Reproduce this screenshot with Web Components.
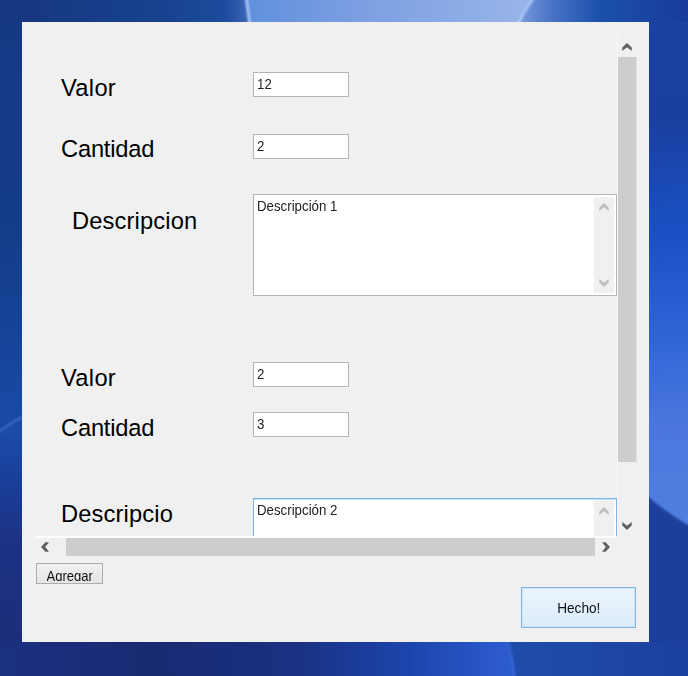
<!DOCTYPE html>
<html lang="es">
<head>
<meta charset="utf-8">
<title>Formulario</title>
<style>
html,body{margin:0;height:100%;overflow:hidden}
body{font-family:"Liberation Sans",Arial,sans-serif;color:#111}
</style>
</head>
<body>
<desk-top>
  <form-window>
    <scroll-pane>
      <field-row label="Valor" value="12" style="margin-top:36px;--ls:.3px"></field-row>
      <field-row label="Cantidad" value="2" style="margin-top:36.5px;--drop:1px;--ls:-.2px"></field-row>
      <field-row label="Descripcion" value="Descripción 1" multi style="margin-top:35px;--indent:37px;--drop:13px;--ls:.15px"></field-row>
      <field-row label="Valor" value="2" style="margin-top:66.5px;--ls:.3px"></field-row>
      <field-row label="Cantidad" value="3" style="margin-top:25px;--ls:-.2px"></field-row>
      <field-row label="Descripcio" value="Descripción 2" multi active style="margin-top:61px;--drop:2px;--ls:.15px"></field-row>
    </scroll-pane>
    <push-button small>Agregar</push-button>
    <push-button primary>Hecho!</push-button>
  </form-window>
</desk-top>
<script>
const define = (name, html, setup) => customElements.define(name, class extends HTMLElement {
  connectedCallback() {
    if (this.shadowRoot) return;
    const t = document.createElement('template');
    t.innerHTML = html;
    this.attachShadow({mode: 'open'}).append(t.content.cloneNode(true));
    if (setup) setup(this, this.shadowRoot);
  }
});

define('chevron-icon', `
<style>
:host{display:block;width:10px;height:8px;color:#606060}
:host([dir=left]){transform:rotate(-90deg)}
:host([dir=right]){transform:rotate(90deg)}
:host([dir=down]){transform:rotate(180deg)}
:host([muted]){color:#bfbfbf}
svg{display:block}
</style>
<svg width="10" height="8" viewBox="0 0 10 8"><path d="M5 0L9.7 4.4V8L5 4.2L.3 8V4.4Z" fill="currentColor"/></svg>`);

define('field-row', `
<style>
:host{display:grid;grid-template-columns:218px 1fr;height:25px;flex:none}
:host([multi]){height:102px}
.label{padding-left:var(--indent,26px);padding-top:var(--drop,2px);font-size:23.7px;letter-spacing:var(--ls,0);line-height:28px;white-space:nowrap;color:#000}
.box{box-sizing:border-box;width:96px;height:25px;border:1px solid #b4b4bb;background:#fff;display:flex;justify-content:space-between;padding:1px 2px 2px 3px}
:host([multi]) .box{width:364px;height:102px}
:host([active]) .box{border-color:#7eb4ea;box-shadow:inset 0 1px #c4dff8}
.value{font-size:15px;line-height:19px;height:19px;transform:scaleX(.885);transform-origin:0 0;white-space:nowrap;color:#222}
.bar{display:none;width:15px;background:#f0f0f0;flex-direction:column;justify-content:space-between;align-items:center;padding:6px 3px 6px 2px;margin-top:1px}
:host([multi]) .bar{display:flex}
</style>
<div class="label"></div>
<div class="box"><span class="value"></span><div class="bar"><chevron-icon muted></chevron-icon><chevron-icon muted dir="down"></chevron-icon></div></div>`,
(el, root) => {
  root.querySelector('.label').textContent = el.getAttribute('label');
  root.querySelector('.value').textContent = el.getAttribute('value');
});

define('scroll-pane', `
<style>
:host{display:grid;grid-template-columns:582px 19px;grid-template-rows:500px 20px}
.view{display:flex;flex-direction:column;overflow:hidden}
.v{box-sizing:border-box;border-left:1px solid #fafafa;display:flex;flex-direction:column;align-items:center;padding:7px 0 6px}
.v .thumb{width:18px;height:405px;background:#cdcdcd;margin:6px 0 auto;border-right:1px solid #e0e0e0;box-sizing:content-box}
.h{box-sizing:border-box;border-top:2px solid #fcfcfc;display:flex;align-items:center;padding:0 6px 0 5px}
.h .thumb{width:529px;height:18px;background:#cdcdcd;margin:0 auto 0 16px}
</style>
<div class="view"><slot></slot></div>
<div class="v"><chevron-icon></chevron-icon><div class="thumb"></div><chevron-icon dir="down"></chevron-icon></div>
<div class="h"><chevron-icon dir="left"></chevron-icon><div class="thumb"></div><chevron-icon dir="right"></chevron-icon></div>`);

define('push-button', `
<style>
:host{box-sizing:border-box;display:flex;justify-content:center;overflow:hidden;font-size:15px;color:#111;white-space:nowrap}
span{display:block;transform:scaleX(.91)}
:host([small]){width:67px;height:21px;margin:7px 0 0 1px;border:1px solid #adadad;background:linear-gradient(#f1f1f1,#e5e5e5);padding-top:3px}
:host([small]) span{height:14px;line-height:17px;overflow:hidden;transform:scaleX(.87)}
:host([primary]){width:115px;height:41px;margin:3px 0 0 486px;border:1px solid #7eb4ea;background:linear-gradient(#ebf4fc,#dcecfc);box-shadow:inset 0 0 0 1px #cfe5fa;align-items:center}
</style>
<span><slot></slot></span>`);

define('form-window', `
<style>
:host{display:block;box-sizing:border-box;width:627px;height:620px;padding:14px 13px;background:#f0f0f0}
</style>
<slot></slot>`);

define('desk-top', `
<style>
:host{display:grid;width:688px;height:676px;overflow:hidden}
svg,.content{grid-area:1/1}
.content{z-index:1;padding:22px}
</style>
<svg width="688" height="676" viewBox="0 0 688 676">
<defs>
<linearGradient id="l" x1="0" y1="0" x2="0" y2="1"><stop offset="0" stop-color="#163883"/><stop offset=".35" stop-color="#143c8a"/><stop offset=".62" stop-color="#184aa5"/><stop offset="1" stop-color="#1b2c75"/></linearGradient>
<linearGradient id="l2" x1="0" y1="0" x2="0" y2="1"><stop offset="0" stop-color="#1d4fae"/><stop offset=".25" stop-color="#193f9a"/><stop offset=".5" stop-color="#1c3183"/><stop offset="1" stop-color="#1a2e75"/></linearGradient>
<linearGradient id="t" x1="0" x2="1" y1="0" y2="0"><stop offset="0" stop-color="#6090dc"/><stop offset=".4" stop-color="#7d9fe2"/><stop offset="1" stop-color="#98b5e8"/></linearGradient>
<linearGradient id="top" x1="0" x2="1" y1="0" y2="0"><stop offset="0" stop-color="#17377f"/><stop offset=".6" stop-color="#174290"/><stop offset=".88" stop-color="#1d4a9c"/><stop offset="1" stop-color="#4169b8"/></linearGradient>
<linearGradient id="tr" gradientUnits="userSpaceOnUse" x1="517" x2="688" y1="0" y2="0"><stop offset="0" stop-color="#7b9bdd"/><stop offset=".2" stop-color="#4a74c6"/><stop offset=".48" stop-color="#1b50ac"/><stop offset=".75" stop-color="#1b45a5"/><stop offset="1" stop-color="#183b99"/></linearGradient>
<linearGradient id="r" gradientUnits="userSpaceOnUse" x1="649" y1="22" x2="679" y2="525"><stop offset="0" stop-color="#1b429f"/><stop offset=".18" stop-color="#1a3f9c"/><stop offset=".42" stop-color="#1a50c5"/><stop offset=".52" stop-color="#2459cf"/><stop offset=".66" stop-color="#3568d9"/><stop offset=".8" stop-color="#4b77dc"/><stop offset="1" stop-color="#507fe0"/></linearGradient>
<linearGradient id="b" gradientUnits="userSpaceOnUse" x1="0" x2="510" y1="0" y2="0"><stop offset="0" stop-color="#1b3080"/><stop offset=".3" stop-color="#182b72"/><stop offset=".58" stop-color="#1a3182"/><stop offset=".8" stop-color="#1c45ac"/><stop offset="1" stop-color="#2d5cd0"/></linearGradient>
<linearGradient id="br" gradientUnits="userSpaceOnUse" x1="508" x2="688" y1="0" y2="0"><stop offset="0" stop-color="#1f4dab"/><stop offset="1" stop-color="#1c409f"/></linearGradient>
<filter id="s" filterUnits="userSpaceOnUse" x="-20" y="-20" width="728" height="716"><feGaussianBlur stdDeviation="1.2"/></filter>
</defs>
<rect width="260" height="676" fill="url(#l)"/>
<rect x="22" width="230" height="24" fill="url(#top)"/>
<path d="M0 430Q11 422 30 414V676H0Z" fill="url(#l2)"/>
<path d="M-4 434Q11 422 30 413" fill="none" stroke="#4873c5" stroke-width="1.5" filter="url(#s)"/>
<path d="M246 0H533L517 24H249Z" fill="url(#t)"/>
<path d="M532 0H688V24H519Q523 12 532 0Z" fill="url(#tr)"/>
<path d="M246 -4L250 26M535 -4Q523 13 517 26" fill="none" stroke="#a5c3f5" stroke-width="3" filter="url(#s)"/>
<rect x="640" y="22" width="60" height="520" fill="url(#r)"/>
<path d="M640 489Q662 511 700 532V700H640Z" fill="#1a3f9a" filter="url(#s)"/>
<rect y="642" width="515" height="34" fill="url(#b)"/>
<path d="M507 642H688V676H515Q513 658 507 642Z" fill="url(#br)"/>
<path d="M507 636Q513 658 515 682" fill="none" stroke="#3866d2" stroke-width="2" filter="url(#s)"/>
</svg>
<div class="content"><slot></slot></div>`);
</script>
</body>
</html>
